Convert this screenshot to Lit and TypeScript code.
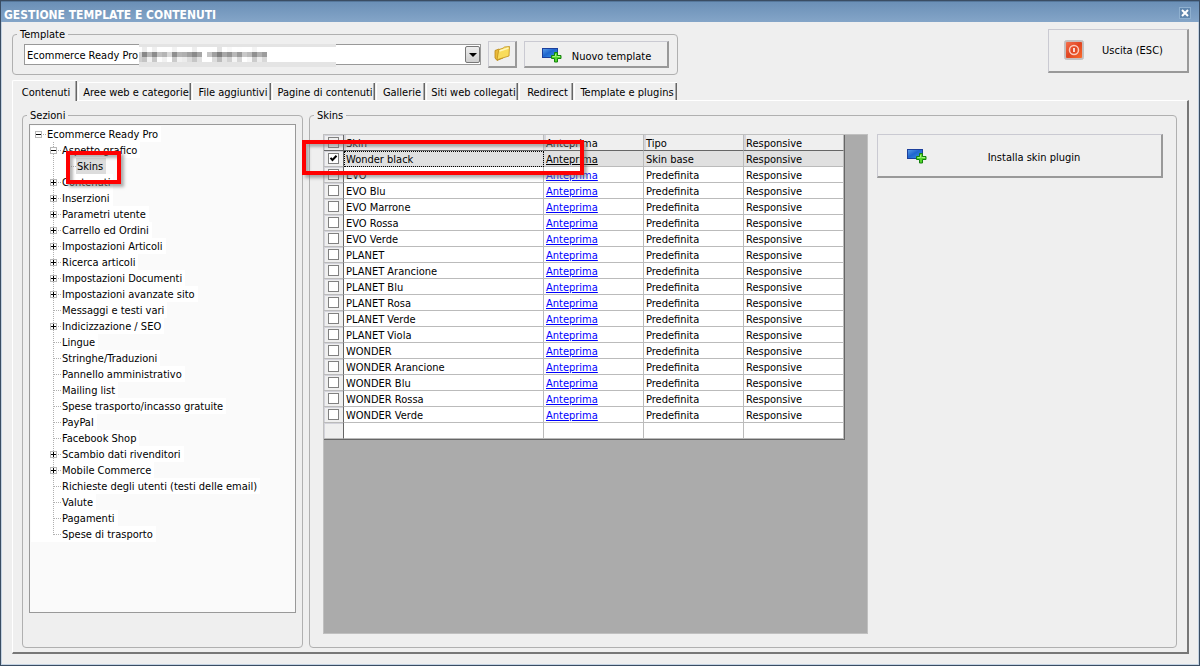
import { LitElement, html, css, svg, nothing } from "lit";
import { customElement } from "lit/decorators.js";
import { classMap } from "lit/directives/class-map.js";

type NodeKind = "open" | "closed" | "leaf";

interface TreeItem {
  label: string;
  level: number;
  kind: NodeKind;
  selected?: boolean;
}

const item = (label: string, kind: NodeKind = "leaf", level = 1, selected = false): TreeItem => ({
  label,
  level,
  kind,
  selected,
});

const SECTIONS: TreeItem[] = [
  item("Ecommerce Ready Pro", "open", 0),
  item("Aspetto grafico", "open"),
  item("Skins", "leaf", 2, true),
  item("Contenuti", "closed"),
  item("Inserzioni", "closed"),
  item("Parametri utente", "closed"),
  item("Carrello ed Ordini", "closed"),
  item("Impostazioni Articoli", "closed"),
  item("Ricerca articoli", "closed"),
  item("Impostazioni Documenti", "closed"),
  item("Impostazioni avanzate sito", "closed"),
  item("Messaggi e testi vari"),
  item("Indicizzazione / SEO", "closed"),
  item("Lingue"),
  item("Stringhe/Traduzioni"),
  item("Pannello amministrativo"),
  item("Mailing list"),
  item("Spese trasporto/incasso gratuite"),
  item("PayPal"),
  item("Facebook Shop"),
  item("Scambio dati rivenditori", "closed"),
  item("Mobile Commerce", "closed"),
  item("Richieste degli utenti (testi delle email)"),
  item("Valute"),
  item("Pagamenti"),
  item("Spese di trasporto"),
];

const SKINS = [
  "Wonder black",
  "EVO",
  "EVO Blu",
  "EVO Marrone",
  "EVO Rossa",
  "EVO Verde",
  "PLANET",
  "PLANET Arancione",
  "PLANET Blu",
  "PLANET Rosa",
  "PLANET Verde",
  "PLANET Viola",
  "WONDER",
  "WONDER Arancione",
  "WONDER Blu",
  "WONDER Rossa",
  "WONDER Verde",
];

const TABS = [
  "Contenuti",
  "Aree web e categorie",
  "File aggiuntivi",
  "Pagine di contenuti",
  "Gallerie",
  "Siti web collegati",
  "Redirect",
  "Template e plugins",
];

// Grey levels of the 5px tiles hiding the end of the template name.
const TILES = [136, 181, 140, 192, 181, 216, 143, 181, 176, 160, 138, 165, 255, 197, 160, 128, 168, 149, 184, 154, 200, 187, 144, 176, 156];

const base = css`
  :host {
    font-family: "DejaVu Sans Condensed", "DejaVu Sans", sans-serif;
    font-size: 11px;
    line-height: 14px;
    color: #000;
  }
  * {
    box-sizing: border-box;
  }
  button,
  select,
  input {
    font: inherit;
    color: inherit;
    margin: 0;
    border-radius: 0;
  }
  svg {
    display: block;
    flex: none;
  }
`;

const screenAdd = html`<svg width="20" height="15" viewBox="0 0 20 15" aria-hidden="true">
  <defs>
    <linearGradient id="s" x1="0" y1="0" x2="1" y2="1">
      <stop offset="0" stop-color="#5c9fe8" />
      <stop offset=".45" stop-color="#1f66cf" />
      <stop offset="1" stop-color="#3c9be8" />
    </linearGradient>
  </defs>
  <rect x=".5" y=".5" width="15" height="9" fill="url(#s)" stroke="#1c3f9c" />
  <path d="M12.5 4.500h3v3h3.500v3h-3.500v3.500h-3v-3.500h-3v-3h3z" fill="#55d62b" stroke="#14830f" />
  <path d="M13.500 6v2.500h-3M14.500 8.500h3.500" fill="none" stroke="#a6f380" />
</svg>`;

const folder = html`<svg width="17" height="16" viewBox="0 0 17 16" aria-hidden="true">
  <path d="M1 4.500 5 3l1 1.200 3-1.200v9L3 14.500 1 12z" fill="#e9b93a" stroke="#b98713" stroke-width=".8" />
  <path d="M5 3.500 9 2.200l1.500-1.200 5-.5-.5 9.500-9 2.800-3 1L4.500 5z" fill="#f9dc5c" stroke="#c0901a" stroke-width=".8" />
  <path d="M5.500 5 14.500 2" stroke="#fff6b8" stroke-width="1.400" />
</svg>`;

const power = html`<svg width="20" height="20" viewBox="0 0 20 20" aria-hidden="true">
  <defs>
    <linearGradient id="p" x1="0" y1="0" x2="1" y2="1">
      <stop offset="0" stop-color="#f5704c" />
      <stop offset=".5" stop-color="#e04622" />
      <stop offset="1" stop-color="#fb6b2a" />
    </linearGradient>
  </defs>
  <rect x=".5" y=".5" width="19" height="19" rx="2" fill="#c9bcb9" stroke="#c2c2c2" />
  <rect x="2" y="2" width="16" height="16" rx="1" fill="url(#p)" />
  <circle cx="10" cy="10" r="4.500" fill="none" stroke="#fbcabb" stroke-width="1.500" />
  <path d="M10 8v4" stroke="#fff" stroke-width="1.600" />
</svg>`;

@customElement("section-tree")
export class SectionTree extends LitElement {
  static styles = [
    base,
    css`
      :host {
        display: block;
        background: #fafafa;
        border: 1px solid #999;
        padding: 1px;
      }
      .list {
        list-style: none;
        margin: 0;
        padding: 0;
      }
      .row {
        position: relative;
        display: flex;
        width: max-content;
        height: 16px;
        background: #fff;
      }
      .label {
        padding: 2px 3px 0 1px;
        white-space: nowrap;
      }
      .picked {
        background: #dcdcdc;
      }
      .pad {
        width: 15px;
      }
      .mark {
        position: absolute;
        z-index: 1;
        left: 35px;
        top: -7px;
        width: 55px;
        height: 33px;
        border: 4px solid #f00;
        box-shadow: 3px 3px 3px rgba(120, 120, 120, 0.6), inset 3px 3px 3px rgba(120, 120, 120, 0.55);
      }
    `,
  ];

  private cell(kind: NodeKind | "line", root: boolean, last: boolean) {
    const dots = (d: string) => svg`<path d=${d} stroke="#b0b0b0" stroke-dasharray="1 1" fill="none" />`;
    return html`<svg width="15" height="16" viewBox="0 0 15 16" shape-rendering="crispEdges" aria-hidden="true">
      ${root ? nothing : dots(last ? "M7.500 0v9" : "M7.500 0v16")}
      ${kind === "line" ? nothing : dots("M8 8.500h7")}
      ${kind === "open" || kind === "closed"
        ? svg`<rect x="4.500" y="5.500" width="6" height="6" fill="#fff" stroke="#b8b8b8" />
            <path d=${kind === "open" ? "M5 8.500h5" : "M5 8.500h5M7.500 6v5"} stroke="#000" />`
        : nothing}
    </svg>`;
  }

  render() {
    return html`<ul class="list" role="tree">
      ${SECTIONS.map((n, i) => {
        const last = n.level === 2 || i === SECTIONS.length - 1;
        return html`<li class="row" role="treeitem" aria-level=${n.level + 1}>
          ${n.level > 0 ? html`<span class="pad"></span>` : nothing}
          ${n.level > 1 ? this.cell("line", false, false) : nothing}
          ${this.cell(n.kind, n.level === 0, last)}
          <span class=${classMap({ label: true, picked: !!n.selected })}>${n.label}</span>
          ${n.selected ? html`<span class="mark"></span>` : nothing}
        </li>`;
      })}
    </ul>`;
  }
}

@customElement("skin-grid")
export class SkinGrid extends LitElement {
  static styles = [
    base,
    css`
      :host {
        display: block;
        position: relative;
        background: #ababab;
        border: 1px solid #c0c0c0;
      }
      .table {
        width: 521px;
        table-layout: fixed;
        border-collapse: separate;
        border-spacing: 0;
        border-right: 1px solid #666;
        border-bottom: 1px solid #666;
      }
      .check-col {
        width: 20px;
      }
      .name-col {
        width: 200px;
      }
      .cell {
        height: 16px;
        padding: 2px 2px 0;
        line-height: 13px;
        font-weight: normal;
        text-align: left;
        white-space: nowrap;
        background: #fff;
        border-right: 1px solid #bbb;
        border-bottom: 1px solid #bbb;
      }
      .head {
        background: #efefef;
        border-bottom-color: #666;
        box-shadow: inset 2px 0 0 #d6d6dc;
      }
      .tick {
        padding: 0 0 0 4px;
        background: #efefef;
        border-right-color: #666;
        box-shadow: inset 1px 1px 0 #d2d2da;
      }
      .current {
        background: #e0e0e0;
      }
      .focus {
        outline: 1px dotted #000;
        outline-offset: -1px;
      }
      .link {
        color: #00f;
      }
      .link.visited {
        color: #000;
      }
      .box {
        appearance: none;
        display: grid;
        width: 11px;
        height: 11px;
        border: 1px solid #808080;
        background: #fff;
      }
      .box.plain {
        background: #efefef;
      }
      .box:checked {
        background: #fff
          url("data:image/svg+xml,%3Csvg xmlns='http://www.w3.org/2000/svg' viewBox='0 0 9 9'%3E%3Cpath d='M1.500 3.800 3.500 6l4-4.200' fill='none' stroke='%23000' stroke-width='2'/%3E%3C/svg%3E");
      }
      .mark {
        position: absolute;
        left: -22px;
        top: 5px;
        width: 282px;
        height: 35px;
        border: 4px solid #f00;
        box-shadow: 3px 3px 3px rgba(120, 120, 120, 0.6), inset 3px 3px 3px rgba(120, 120, 120, 0.55);
      }
    `,
  ];

  render() {
    return html`<table class="table">
        <colgroup>
          <col class="check-col" />
          <col class="name-col" />
          <col />
          <col />
          <col />
        </colgroup>
        <thead>
          <tr>
            <th class="cell head tick"><input class="box plain" type="checkbox" aria-label="Seleziona tutto" /></th>
            ${["Skin", "Anteprima", "Tipo", "Responsive"].map((h) => html`<th class="cell head">${h}</th>`)}
          </tr>
        </thead>
        <tbody>
          ${SKINS.map((name, i) => {
            const current = i === 0;
            const cell = classMap({ cell: true, current });
            return html`<tr>
              <td class="cell tick">
                <input class="box" type="checkbox" aria-label=${name} ?checked=${current} />
              </td>
              <td class=${classMap({ cell: true, current, focus: current })}>${name}</td>
              <td class=${cell}><a class=${classMap({ link: true, visited: current })} href="#">Anteprima</a></td>
              <td class=${cell}>${current ? "Skin base" : "Predefinita"}</td>
              <td class=${cell}>Responsive</td>
            </tr>`;
          })}
          <tr>
            <td class="cell tick"></td>
            <td class="cell"></td>
            <td class="cell"></td>
            <td class="cell"></td>
            <td class="cell"></td>
          </tr>
        </tbody>
      </table>
      <span class="mark"></span>`;
  }
}

@customElement("app-root")
export class AppRoot extends LitElement {
  static styles = [
    base,
    css`
      :host {
        display: flex;
        flex-direction: column;
        min-height: 100vh;
        background: #efefef;
        border: 1px solid #3a4d63;
        box-shadow: inset -1px -1px 0 #c3d2e2, inset 1px 0 0 #c3d2e2;
      }
      :host,
      * {
        box-sizing: border-box;
      }
      .titlebar {
        display: flex;
        align-items: center;
        justify-content: space-between;
        height: 21px;
        padding: 4px 8px 0 3px;
        border-top: 1px solid #55779b;
        background: linear-gradient(#6b90b7, #84a5c8);
        color: #fff;
      }
      .title {
        margin: 0;
        padding-top: 2px;
        font-size: 12px;
        line-height: 14px;
        font-weight: bold;
      }
      .close {
        display: grid;
        place-items: center;
        width: 12px;
        height: 12px;
        margin-bottom: 2px;
        padding: 0;
        border: 1px solid #8fb0cf;
        background: #5f86ae;
      }
      .body {
        flex: 1;
        display: flex;
        flex-direction: column;
        padding: 5px 10px 11px 11px;
      }
      .top {
        display: flex;
        justify-content: space-between;
        align-items: flex-start;
        margin-bottom: 5px;
      }
      .group {
        display: flex;
        flex-direction: column;
        min-width: 0;
        margin: 0;
        padding: 0 4px;
        border: 1px solid #b0b0b0;
        border-radius: 4px;
      }
      .legend {
        padding: 2px 3px 0;
        line-height: 12px;
      }
      .template-row {
        display: grid;
        grid-template-columns: 457px 29px 145px;
        gap: 7px;
        align-items: center;
        padding: 0 4px 6px 7px;
      }
      .combo {
        position: relative;
      }
      .select {
        display: block;
        appearance: none;
        width: 100%;
        height: 21px;
        padding: 3px 20px 0 2px;
        border: 1px solid #999;
        background: #fff;
      }
      .arrow {
        position: absolute;
        right: 1px;
        top: 2px;
        display: grid;
        place-items: center;
        width: 15px;
        height: 17px;
        border: 1px solid #777;
        border-radius: 2px;
        background: linear-gradient(#eee, #cfcfcf);
        pointer-events: none;
      }
      .tiles {
        position: absolute;
        left: 115px;
        top: 0;
      }
      .btn {
        display: flex;
        align-items: center;
        padding: 2px 6px 0 17px;
        border: 1px solid #cacad2;
        border-right: 2px solid #999;
        border-bottom: 2px solid #999;
        background: #efefef;
        height: 44px;
      }
      .btn.low {
        height: 27px;
      }
      .btn.icon {
        justify-content: center;
        padding: 0;
      }
      .btn.exit {
        width: 141px;
        margin-top: 2px;
        padding: 0 6px 2px 15px;
      }
      .btn.wide {
        padding: 2px 20px 0 29px;
      }
      .caption {
        flex: 1;
        padding-top: 3px;
        text-align: center;
        white-space: nowrap;
      }
      .tabs {
        display: grid;
        grid-template-columns: 65px 113px 79px 103px 49px 92px 54px 103px;
        gap: 1px;
        align-items: end;
        height: 20px;
      }
      .tab {
        height: 18px;
        padding: 3px 0 0 2px;
        border: 0 solid #fff;
        border-width: 1px 0 0 1px;
        border-radius: 2px 0 0 0;
        box-shadow: inset -1px 0 0 #666, inset -2px 0 0 #aaa;
        background: #efefef;
        white-space: nowrap;
      }
      .tab.active {
        height: 21px;
        margin-bottom: -1px;
        z-index: 1;
      }
      .panel {
        flex: 1;
        display: grid;
        grid-template-columns: 281px minmax(0, 1fr);
        gap: 6px;
        padding: 7px 10px 4px 9px;
        border-style: solid;
        border-width: 1px 2px 2px 1px;
        border-color: #fff #777 #777 #fff;
      }
      .sections {
        flex: 1;
        display: grid;
        padding: 2px 2px 34px;
      }
      .skins {
        flex: 1;
        display: grid;
        grid-template-columns: minmax(0, 1fr) 286px;
        gap: 9px;
        padding: 12px 9px 13px;
      }
    `,
  ];

  render() {
    return html`
      <header class="titlebar">
        <h1 class="title">GESTIONE TEMPLATE E CONTENUTI</h1>
        <button class="close" aria-label="Chiudi">
          <svg width="8" height="8" viewBox="0 0 8 8"><path d="m1 1 6 6M7 1 1 7" stroke="#fff" stroke-width="2" /></svg>
        </button>
      </header>
      <main class="body">
        <div class="top">
          <fieldset class="group">
            <legend class="legend">Template</legend>
            <div class="template-row">
              <div class="combo">
                <select class="select" aria-label="Template">
                  <option>Ecommerce Ready Pro (</option>
                </select>
                <span class="arrow">
                  <svg width="8" height="4" viewBox="0 0 8 4"><path d="M0 0h8L4 4z" /></svg>
                </span>
                <svg class="tiles" width="197" height="23" viewBox="0 0 197 23" shape-rendering="crispEdges" aria-hidden="true">
                  <rect width="197" height="23" fill="#e4e4e4" />
                  <rect y="3" width="197" height="15" fill="#fff" />
                  <rect y="8" width="3" height="10" fill="#d0d0d0" />
                  ${TILES.map((g, i) => {
                    const soft = Math.min(255, g + 60);
                    const faint = Math.min(255, g + 100);
                    return svg`<rect x=${3 + i * 5} y="3" width="5" height="5" fill="rgb(${faint},${faint},${faint})" />
                      <rect x=${3 + i * 5} y="8" width="5" height="5" fill="rgb(${g},${g},${g})" />
                      <rect x=${3 + i * 5} y="13" width="5" height="5" fill="rgb(${soft},${soft},${soft})" />`;
                  })}
                </svg>
              </div>
              <button class="btn low icon" aria-label="Apri cartella">${folder}</button>
              <button class="btn low">${screenAdd}<span class="caption">Nuovo template</span></button>
            </div>
          </fieldset>
          <button class="btn exit">${power}<span class="caption">Uscita (ESC)</span></button>
        </div>
        <div class="tabs" role="tablist">
          ${TABS.map(
            (t, i) => html`<button class=${classMap({ tab: true, active: i === 0 })} role="tab" aria-selected=${i === 0}>${t}</button>`
          )}
        </div>
        <div class="panel" role="tabpanel">
          <fieldset class="group">
            <legend class="legend">Sezioni</legend>
            <div class="sections"><section-tree></section-tree></div>
          </fieldset>
          <fieldset class="group">
            <legend class="legend">Skins</legend>
            <div class="skins">
              <skin-grid></skin-grid>
              <button class="btn wide">${screenAdd}<span class="caption">Installa skin plugin</span></button>
            </div>
          </fieldset>
        </div>
      </main>
    `;
  }
}
